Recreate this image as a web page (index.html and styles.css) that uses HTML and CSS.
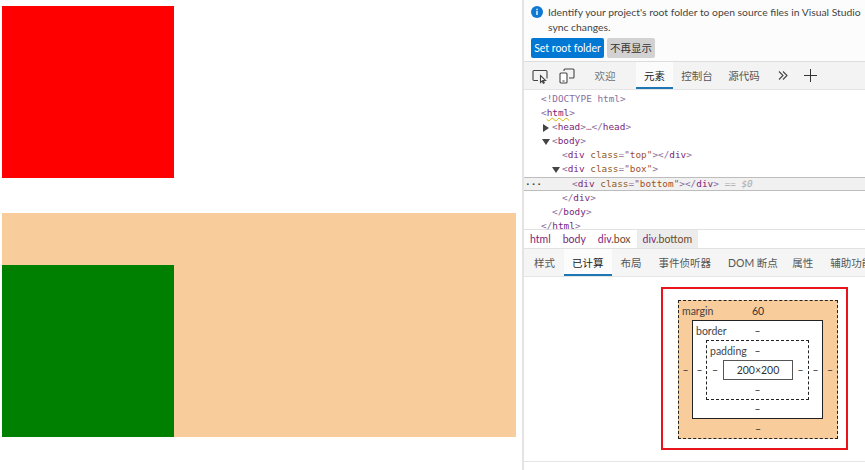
FILE: index.html
```html
<!DOCTYPE html>
<html lang="zh">
<head>
<meta charset="utf-8">
<title>DevTools</title>
<link rel="stylesheet" href="styles.css">
</head>
<body>
<main class="page">
  <section class="canvas">
    <div class="top"></div>
    <div class="box"><div class="bottom"></div></div>
  </section>
  <aside class="devtools">
    <div class="infobar">
      <div class="info-msg">
        <svg class="info-icon" width="12" height="12" viewBox="0 0 12 12"><circle cx="6" cy="6" r="6" fill="#0f78d4"/><rect x="5.3" y="5" width="1.4" height="4" fill="#fff"/><rect x="5.3" y="2.8" width="1.4" height="1.4" fill="#fff"/></svg>
        <p class="info-text">Identify your project's root folder to open source files in Visual Studio sync changes.</p>
      </div>
      <div class="info-actions">
        <button class="btn btn-primary">Set root folder</button>
        <button class="btn btn-muted">不再显示</button>
      </div>
    </div>
    <div class="toolbar">
      <svg class="tool-icon" width="16" height="16" viewBox="0 0 16 16" fill="none" stroke="#444" stroke-width="1.1"><path d="M6 12.5H2a1 1 0 0 1-1-1v-8a1 1 0 0 1 1-1h12a1 1 0 0 1 1 1v7"/><path d="M8.5 7.5v7l1.7-1.6 1.1 2.4 1-.5-1-2.3h2.3z" fill="#fff"/></svg>
      <svg class="tool-icon icon-device" width="16" height="16" viewBox="0 0 16 16" fill="none" stroke="#444" stroke-width="1.1"><path d="M5 3V2a1 1 0 0 1 1-1h8a1 1 0 0 1 1 1v7a1 1 0 0 1-1 1H10"/><rect x="1" y="5" width="7" height="10" rx="1" fill="#fff"/><path d="M3.5 13h2"/></svg>
      <div class="tab tab-welcome">欢迎</div>
      <div class="tab tab-active tab-elements">元素</div>
      <div class="tab tab-console">控制台</div>
      <div class="tab tab-source">源代码</div>
      <svg class="more" width="10" height="9" viewBox="0 0 10 9" fill="none" stroke="#444" stroke-width="1.1"><path d="M1 .5l4 4-4 4M5 .5l4 4-4 4"/></svg>
      <svg class="plus" width="13" height="13" viewBox="0 0 13 13" stroke="#333" stroke-width="1"><path d="M6.5 0v13M0 6.5h13"/></svg>
    </div>
    <div class="dom">
      <div class="line i0"><span class="punct">&lt;!DOCTYPE html&gt;</span></div>
      <div class="line i0"><span class="punct">&lt;</span><span class="tag squiggle">html</span><span class="punct">&gt;</span></div>
      <div class="line i1"><span class="arrow-r"></span><span class="punct">&lt;</span><span class="tag">head</span><span class="punct">&gt;…&lt;/</span><span class="tag">head</span><span class="punct">&gt;</span></div>
      <div class="line i1"><span class="arrow-d"></span><span class="punct">&lt;</span><span class="tag">body</span><span class="punct">&gt;</span></div>
      <div class="line i2"><span class="punct">&lt;</span><span class="tag">div</span> <span class="attr">class</span><span class="punct">=</span><span class="val">"top"</span><span class="punct">&gt;&lt;/</span><span class="tag">div</span><span class="punct">&gt;</span></div>
      <div class="line i2"><span class="arrow-d"></span><span class="punct">&lt;</span><span class="tag">div</span> <span class="attr">class</span><span class="punct">=</span><span class="val">"box"</span><span class="punct">&gt;</span></div>
      <div class="line i3 selected"><span class="dots">···</span><span class="punct">&lt;</span><span class="tag">div</span> <span class="attr">class</span><span class="punct">=</span><span class="val">"bottom"</span><span class="punct">&gt;&lt;/</span><span class="tag">div</span><span class="punct">&gt;</span> <span class="eq">== <i>$0</i></span></div>
      <div class="line i2"><span class="punct">&lt;/</span><span class="tag">div</span><span class="punct">&gt;</span></div>
      <div class="line i1"><span class="punct">&lt;/</span><span class="tag">body</span><span class="punct">&gt;</span></div>
      <div class="line i0"><span class="punct">&lt;/</span><span class="tag">html</span><span class="punct">&gt;</span></div>
    </div>
    <nav class="crumbs">
      <span class="crumb c-tag">html</span>
      <span class="crumb c-tag">body</span>
      <span class="crumb"><span class="c-tag">div</span><span class="c-class">.box</span></span>
      <span class="crumb crumb-active"><span class="c-tag">div</span><span class="c-class">.bottom</span></span>
    </nav>
    <div class="subtabs">
      <div class="subtab">样式</div>
      <div class="subtab subtab-active">已计算</div>
      <div class="subtab">布局</div>
      <div class="subtab">事件侦听器</div>
      <div class="subtab subtab-dom">DOM 断点</div>
      <div class="subtab">属性</div>
      <div class="subtab">辅助功能</div>
    </div>
    <div class="computed">
      <div class="frame">
        <div class="bm bm-margin">
          <span class="bm-label">margin</span>
          <div class="bm-top">60</div><div class="bm-left">–</div>
          <div class="bm bm-border">
            <span class="bm-label">border</span>
            <div class="bm-top">–</div><div class="bm-left">–</div>
            <div class="bm bm-padding">
              <span class="bm-label">padding</span>
              <div class="bm-top">–</div><div class="bm-left">–</div>
              <div class="bm-content">200×200</div>
              <div class="bm-right">–</div><div class="bm-bottom">–</div>
            </div>
            <div class="bm-right">–</div><div class="bm-bottom">–</div>
          </div>
          <div class="bm-right">–</div><div class="bm-bottom">–</div>
        </div>
      </div>
    </div>
    <div class="statusbar"></div>
  </aside>
</main>
</body>
</html>
```
FILE: styles.css
```css
* { box-sizing: border-box; }
html, body { margin: 0; height: 100%; overflow: hidden; background: #fff; }
body { font-family: "Lato", "Noto Sans CJK SC", sans-serif; color: #333; }
.page { display: flex; width: 865px; height: 470px; }

.canvas { flex: 0 0 522px; padding: 6px 6px 0 2px; }
.top { width: 172px; height: 172px; background: #f00; }
.box { margin-top: 35px; height: 224px; padding-top: 52px; background: #f8cd9b; }
.bottom { width: 172px; height: 172px; background: #008000; }

.devtools { flex: 1; min-width: 0; display: flex; flex-direction: column; border-left: 2px solid #e4e4e4; overflow: hidden; }

.infobar { height: 62px; padding: 5px 0 0 7px; border-bottom: 1px solid #ddd; background: #fcfcfc; }
.info-msg { display: flex; gap: 5px; }
.info-icon { flex: none; margin-top: 1px; }
.info-text { margin: 0; flex: none; width: 317px; font-size: 10.35px; line-height: 14.5px; color: #444; }
.info-actions { display: flex; gap: 3px; margin-top: 4px; }
.btn { border: 0; border-radius: 2px; height: 20px; padding: 0; font: 10.5px/20px "Lato", "Noto Sans CJK SC", sans-serif; }
.btn-primary { width: 73px; background: #0078d4; color: #fff; }
.btn-muted { width: 48px; background: #d2d2d2; color: #333; }

.toolbar { height: 28px; display: flex; align-items: center; background: #f3f3f3; padding-left: 8px; border-bottom: 1px solid #e4e4e4; }
.tool-icon { flex: none; }
.icon-device { margin-left: 11px; }
.tab { height: 27px; font-size: 10.5px; line-height: 28px; color: #555; text-align: center; }
.tab-welcome { margin-left: 11px; width: 38px; color: #777; }
.tab-elements { margin-left: 12px; width: 37px; }
.tab-console { margin-left: 2px; width: 44px; }
.tab-source { margin-left: 5px; width: 40px; }
.tab-active { color: #222; background: #fbfbfb; border-bottom: 2px solid #1f76b5; }
.more { margin-left: 14px; flex: none; }
.plus { margin-left: 16px; flex: none; }

.dom { height: 139px; padding-top: 2px; background: #fff; font: 9.4px/14.1px "DejaVu Sans Mono", monospace; }
.line { position: relative; height: 14.1px; white-space: pre; }
.i0 { padding-left: 17px; }
.i1 { padding-left: 28px; }
.i2 { padding-left: 38px; }
.i3 { padding-left: 48px; }
.punct { color: #8a6fa0; }
.tag { color: #7a1f7a; }
.attr { color: #8f5a1e; }
.val { color: #a0522d; }
.squiggle { text-decoration: underline wavy #d8b400 1px; }
.selected { background: #f1f1f1; border-top: 1px solid #bdbdbd; border-bottom: 1px solid #bdbdbd; line-height: 12.5px; }
.eq { color: #aaa; }
.dots { position: absolute; left: 1px; top: 0; color: #444; font-weight: bold; }
.arrow-r, .arrow-d { position: absolute; width: 0; height: 0; border-style: solid; border-color: transparent; top: 4px; }
.arrow-r { margin-left: -9px; border-width: 4px 0 4px 6px; border-left-color: #444; }
.arrow-d { margin-left: -10px; top: 5px; border-width: 6px 4px 0 4px; border-top-color: #444; }

.crumbs { height: 20px; display: flex; align-items: stretch; background: #fff; border-top: 1px solid #e2e2e2; border-bottom: 1px solid #e2e2e2; font-size: 10.5px; line-height: 19px; }
.crumb { padding: 0 6px; }
.c-tag { color: #7a1f7a; }
.c-class { color: #6a4a2a; }
.crumb-active { background: #ececec; }

.subtabs { height: 28px; display: flex; background: #f5f5f5; border-bottom: 1px solid #e6e6e6; white-space: nowrap; font-size: 10.5px; line-height: 29px; color: #555; padding-left: 1.5px; }
.subtab { padding: 0 8.5px; height: 27px; flex: none; }
.subtab-dom { padding-right: 6px; }
.subtab-active { color: #222; background: #fcfcfc; border-bottom: 2px solid #1f76b5; }

.computed { height: 184px; padding: 10px 0 0 137px; background: #fff; }
.frame { width: 187px; height: 163px; border: 2px solid #e8141c; padding: 11px 0 0 15px; }

.bm { position: relative; display: grid; color: #333; font-size: 10.5px; line-height: 12px; text-align: center; }
.bm-top { grid-column: 1 / 4; align-self: center; }
.bm-bottom { grid-column: 1 / 4; align-self: center; }
.bm-left, .bm-right { align-self: center; }
.bm-label { position: absolute; left: 3px; top: 4px; color: #444; }
.bm-margin { width: 160px; height: 139px; grid-template: 19px 1fr 19px / 13px 1fr 14px; background: #f8cd9b; border: 1px dashed #222; }
.bm-border { grid-template: 19px 1fr 18px / 13px 1fr 13px; background: #fff; border: 1px solid #222; }
.bm-padding { grid-template: 19px 1fr 19px / 16px 1fr 15px; background: #fff; border: 1px dashed #222; }
.bm-content { display: flex; align-items: center; justify-content: center; background: #fff; border: 1px solid #555; }

.statusbar { flex: 1; border-top: 1px solid #e4e4e4; background: #fff; }
```
